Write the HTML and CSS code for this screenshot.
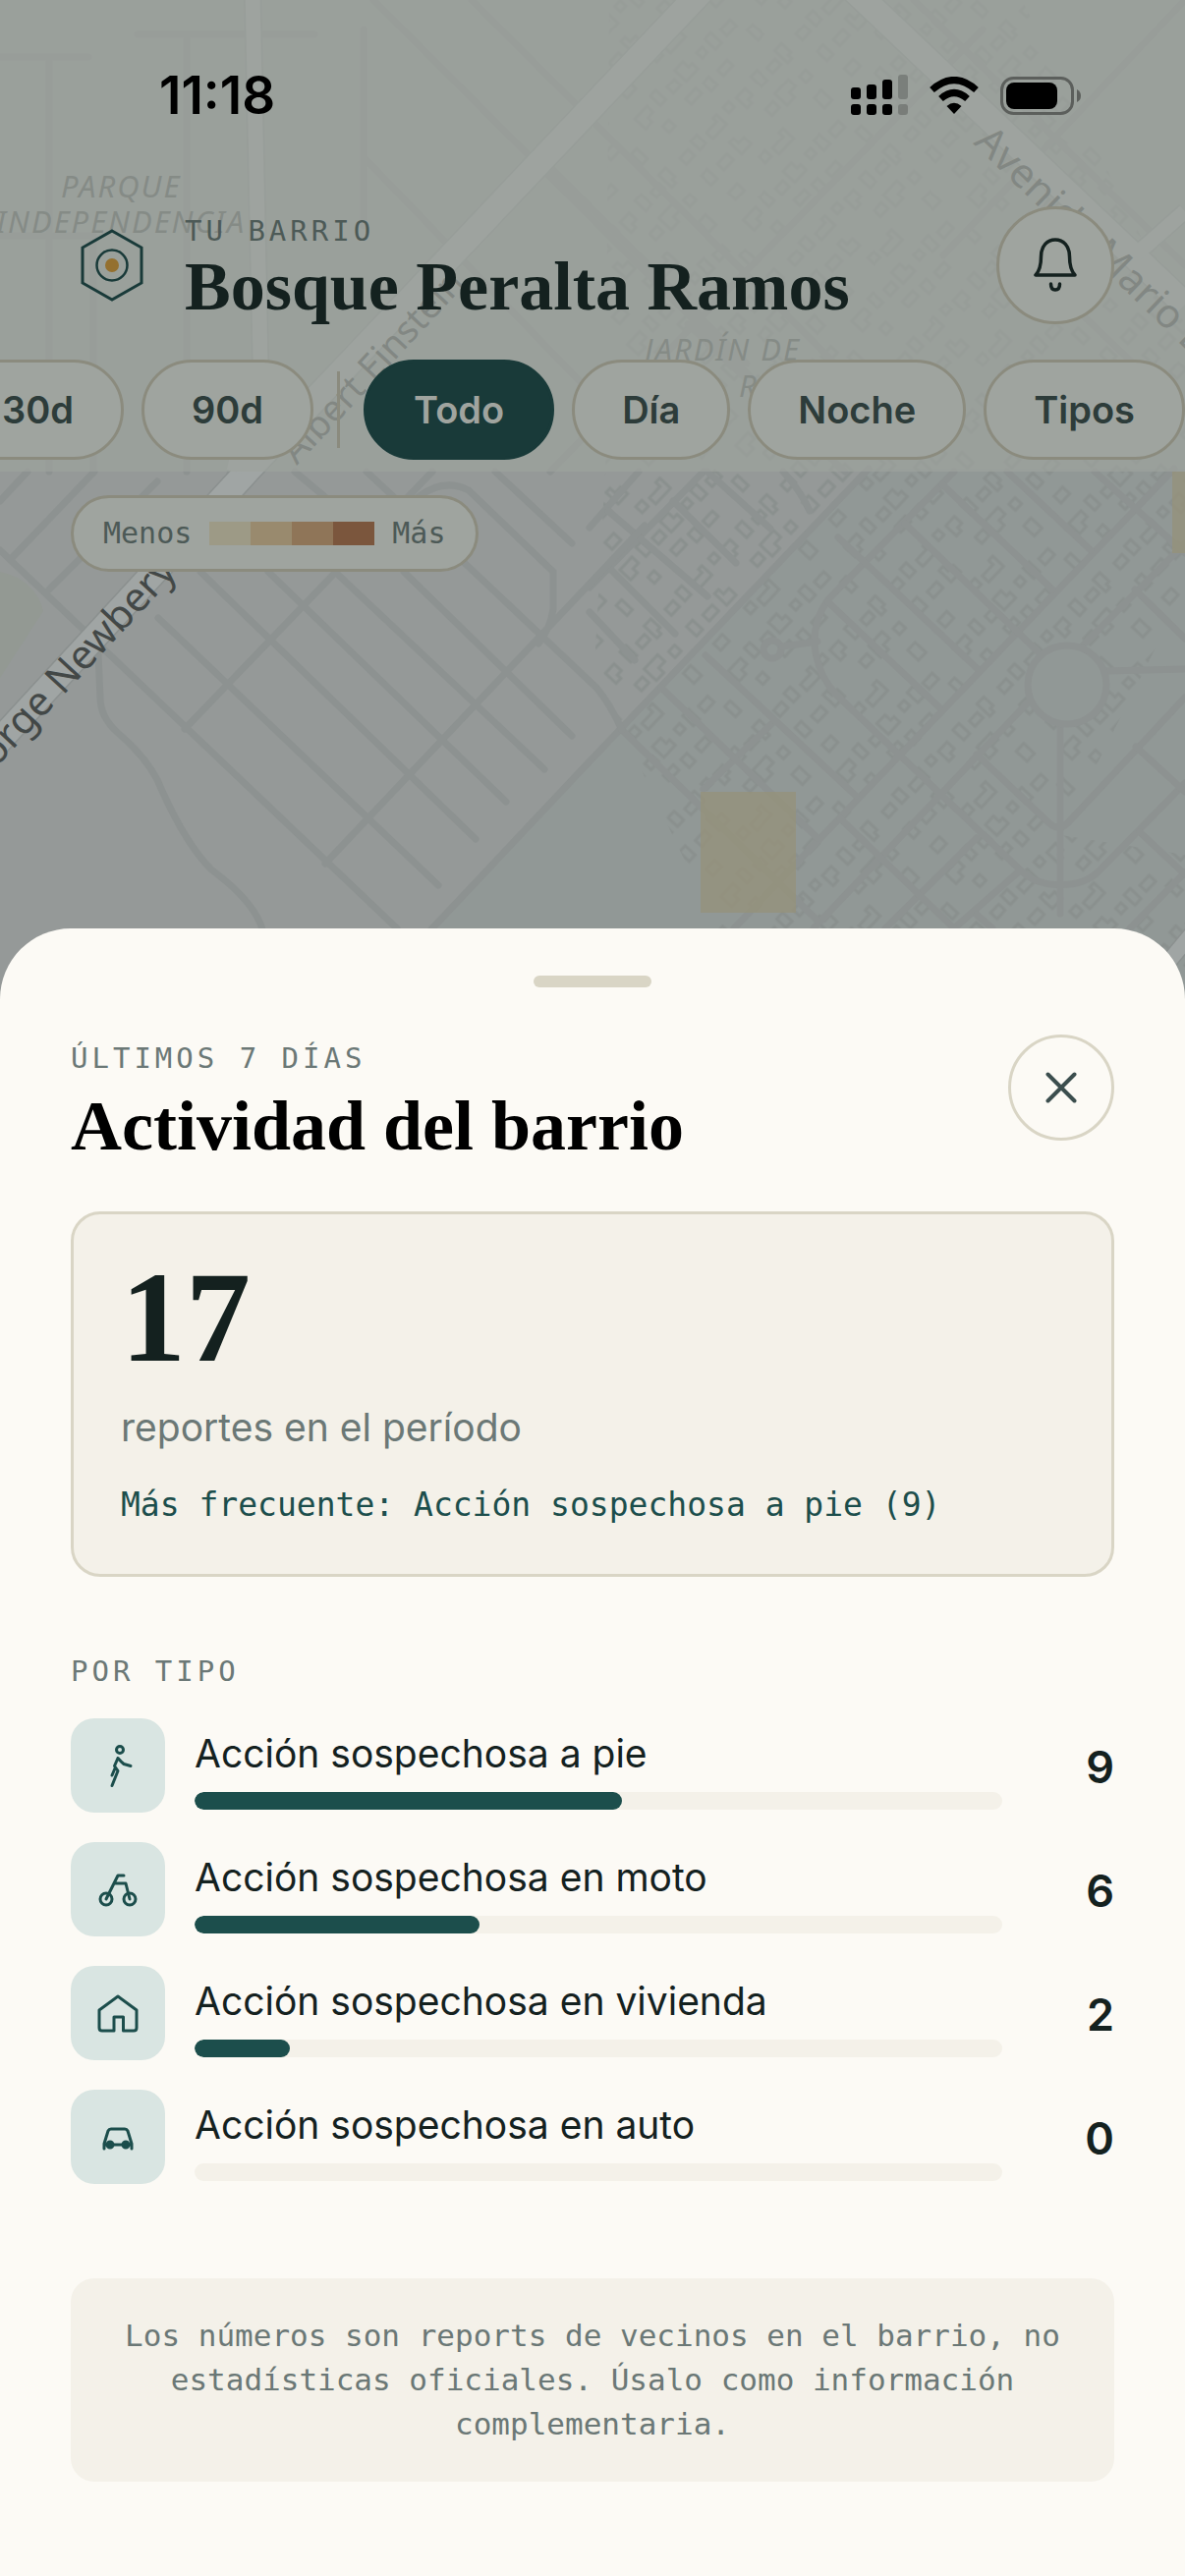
FILE: index.html
```html
<!DOCTYPE html>
<html lang="es">
<head>
<meta charset="utf-8">
<meta name="viewport" content="width=device-width, initial-scale=1">
<title>Actividad del barrio</title>
<link rel="stylesheet" href="styles.css">
</head>
<body>
<div class="screen">
  <svg class="map" viewBox="0 0 1206 1040" preserveAspectRatio="xMidYMin slice" aria-hidden="true">
    <defs>
      <pattern id="houses" width="173" height="151" patternUnits="userSpaceOnUse" patternTransform="rotate(-47)">
        <g class="house">
          <path d="M8 12h12v9h-12zM28 8h9v13h-9zM46 14h15v-5h5v14h-20zM76 9h8v8h-8zM92 12h13v10h-6v5h-7zM118 8h9v15h-9zM136 14h12v8h-12zM154 8h10v13h-4v5h-6z"/>
          <path d="M10 40h9v14h-9zM30 44h14v9h-14zM54 38h6v7h8v10h-14zM104 42h11v9h-11zM122 38h20v10h-9v7h-11zM152 44h9v9h-9z"/>
          <path d="M16 72h13v10h-13zM64 70h9v9h-9zM80 74h16v-6h6v15h-22zM146 70h11v15h-11z"/>
          <path d="M6 102h18v9h-8v6h-10zM34 98h8v14h-8zM52 104h11v9h-11zM70 98h12v8h5v8h-17zM98 102h8v8h-8zM114 99h9v15h-9zM132 104h14v9h-14z"/>
          <path d="M20 128h9v9h-9zM56 126h15v8h-15zM80 128h9v12h-9zM100 130h14v8h-14zM150 124h8v15h-8z"/>
        </g>
      </pattern>
    </defs>
    <rect class="land" width="1206" height="1040"/>
    <path class="land-alt" d="M884 477 631 744 438 947V1040h768V477z"/>
    <path class="park" d="M0 582Q36 590 44 622L0 690z"/>
    <path fill="url(#houses)" d="M620 0H1040L1206 330V600L1080 850L1206 870V1040H740L730 945 633 743 606 660 616 480z"/>
    <circle class="land-alt" cx="1086" cy="697" r="40"/>
    <g class="street">
      <path d="M600 537 650 480M600 598 716 480M438 947 600 775 884 477M716 803 785 737M971 480 843 610C815 650 835 690 851 707L1041 888C1060 905 1100 905 1118 887L1206 797M1195 477 747 945M1206 553 1102 657M1048 713 828 945M1206 710 1090 834Q1079 848 1068 838L994 768M1079 737V930M1126 683 1206 681M1037 887 971 945M994 853 901 945M1150 945 1206 888"/>
      <path d="M619 520 720 607M685 510 749 573M720 480 784 538M797 480Q815 500 824 520M600 623 646 672M619 577 687 645M853 547 994 680M843 613 956 720M921 533 1056 663M959 493 1071 600M1025 480 1110 560M1114 480 1206 563M1155 600 1206 650M1156 760 1206 806M1160 847 1206 890M718 667 871 810M673 700 832 853M633 743 832 937M855 833 971 945M994 931 1010 945"/>
      <path d="M0 560 404 945M161 629 446 901M204 582 484 854M273 582 515 816M342 583 554 783M411 582 582 749M300 480 331 506M373 480 477 577 607 700Q620 715 633 743M504 480 582 553M425 506Q452 486 477 499L563 582V620Q560 640 548 655M331 879 656 535M188 742 440 480M50 600 160 490M12 568 96 480M0 510 28 480M100 666 102 710Q102 730 120 746Q154 775 165 805Q190 860 215 885 262 920 268 950"/>
      <circle cx="1086" cy="697" r="40"/>
      <circle cx="786" cy="661" r="9"/><path d="M796 658 832 653"/>
      <path d="M0 240H95M95 240V480M0 58H90M140 35H320M50 58V480M190 40V480M370 30V230M380 0 800 420M480 0 860 380M560 480 1000 30M700 330 860 480M1206 0 960 260M930 0 1206 270M560 170 760 370M370 160 640 440M1206 420 1080 300"/>
    </g>
    <g class="avenue-edge"><path d="M715 -10 254 477 -20 775M869 -10 1206 310"/><path class="narrow" d="M1155 260 1206 215M257 -10 265 367 238 490M1180 990 1230 930"/></g>
    <g class="avenue"><path d="M715 -10 254 477 -20 775M869 -10 1206 310"/><path class="narrow" d="M1155 260 1206 215M257 -10 265 367 238 480M1180 990 1230 930"/></g>
    <rect class="heat" x="713" y="806" width="97" height="123"/>
    <rect class="heat" x="1193" y="480" width="13" height="83"/>
    <g class="place">
      <text x="62" y="201">PARQUE</text>
      <text x="-4" y="237">INDEPENDENCIA</text>
      <text x="656" y="367">JARDÍN DE</text>
      <text x="752" y="404">R</text>
    </g>
    <g class="road-name">
      <text class="small" transform="translate(302 474) rotate(-47)">Albert Einstein</text>
      <text transform="translate(990 146) rotate(44)">Avenida Mario Bravo</text>
      <text transform="translate(-12 790) rotate(-47)">Jorge Newbery</text>
    </g>
  </svg>

  <header class="top">
    <div class="status">
      <time class="clock">11:18</time>
      <div class="status-icons">
        <svg width="58" height="42" viewBox="0 0 58 42" aria-label="Señal">
          <g><rect y="13" width="10" height="12" rx="3"/><rect x="16" y="10" width="10" height="15" rx="3"/><rect x="32" y="5" width="10" height="20" rx="3"/><rect y="30" width="10" height="11" rx="3"/><rect x="16" y="30" width="10" height="11" rx="3"/><rect x="32" y="30" width="10" height="11" rx="3"/></g>
          <g opacity=".2"><rect x="48" width="10" height="25" rx="3"/><rect x="48" y="30" width="10" height="11" rx="3"/></g>
        </svg>
        <svg width="50" height="38" viewBox="0 0 50 38" aria-label="Wi-Fi">
          <g fill="none" stroke="#000" stroke-width="7"><path d="M2.500 13.500Q25-6.500 47.500 13.500"/><path d="M11.500 22.500Q25 10.500 38.500 22.500"/></g><path d="M25 38 17.500 30Q25 23.500 32.500 30z"/>
        </svg>
        <svg width="82" height="39" viewBox="0 0 82 39" aria-label="Batería">
          <rect x="1.500" y="1.500" width="72" height="36" rx="12" fill="none" stroke="#5c5f5c" stroke-width="3"/><rect x="6" y="6" width="52" height="27" rx="8"/><path d="M78 13q4 2 4 6.500T78 26z" fill="#5c5f5c"/>
        </svg>
      </div>
    </div>
    <div class="place-bar">
      <svg class="logo" width="64" height="74" viewBox="0 0 64 74" fill="none" aria-hidden="true">
        <path d="M32 2 62 19V55L32 72 2 55V19z" stroke="#193a39" stroke-width="3"/><circle cx="32" cy="37" r="15.500" stroke="#193a39" stroke-width="2.500"/><circle cx="32" cy="37" r="7" fill="#94702f"/>
      </svg>
      <div class="place-text">
        <p class="eyebrow">TU BARRIO</p>
        <h1 class="barrio">Bosque Peralta Ramos</h1>
      </div>
      <button class="round bell" type="button" aria-label="Notificaciones">
        <svg width="46" height="58" viewBox="0 0 46 58" fill="none" stroke="currentColor" stroke-width="3.500" stroke-linecap="round" stroke-linejoin="round" aria-hidden="true"><path d="M3 39H43Q37.500 33 37.500 20C37.500 9 31 3 23 3S8.500 9 8.500 20Q8.500 33 3 39z"/><path d="M18.500 48Q18.500 54 23 54T27.500 48"/></svg>
      </button>
    </div>
    <nav class="chips" aria-label="Filtros">
      <button class="chip" type="button">30d</button>
      <button class="chip" type="button">90d</button>
      <span class="divider"></span>
      <button class="chip active" type="button" aria-pressed="true">Todo</button>
      <button class="chip" type="button">Día</button>
      <button class="chip" type="button">Noche</button>
      <button class="chip" type="button">Tipos</button>
    </nav>
  </header>

  <div class="legend">
    <span>Menos</span>
    <span class="scale"><i class="s1"></i><i class="s2"></i><i class="s3"></i><i class="s4"></i></span>
    <span>Más</span>
  </div>

  <main class="sheet">
    <div class="grabber"></div>
    <div class="sheet-head">
      <div>
        <p class="eyebrow">ÚLTIMOS 7 DÍAS</p>
        <h2 class="title">Actividad del barrio</h2>
      </div>
      <button class="round close" type="button" aria-label="Cerrar">
        <svg width="32" height="32" viewBox="0 0 32 32" fill="none" stroke="currentColor" stroke-width="4" stroke-linecap="round" aria-hidden="true"><path d="M2.500 2.500 29.500 29.500M29.500 2.500 2.500 29.500"/></svg>
      </button>
    </div>

    <section class="summary">
      <p class="total">17</p>
      <p class="caption">reportes en el período</p>
      <p class="top-type">Más frecuente: Acción sospechosa a pie (9)</p>
    </section>

    <h3 class="eyebrow by-type">POR TIPO</h3>
    <ul class="types">
      <li class="type">
        <span class="tile"><svg viewBox="0 0 48 48" aria-hidden="true"><circle cx="26" cy="8" r="3.500"/><path d="M24 16.500 20.500 24.500 24 29.500 18 44.500M24 16.500Q27 20 30 22.500L37 24.500M21 27 18 34"/></svg></span>
        <div class="measure"><span class="name">Acción sospechosa a pie</span><div class="track"><div class="fill" style="width:52.94%"></div></div></div>
        <span class="count">9</span>
      </li>
      <li class="type">
        <span class="tile"><svg viewBox="0 0 48 48" aria-hidden="true"><circle cx="12" cy="34" r="6"/><circle cx="36" cy="34" r="6"/><path d="M12 34 24 10H30M20.500 18H32L36 34"/></svg></span>
        <div class="measure"><span class="name">Acción sospechosa en moto</span><div class="track"><div class="fill" style="width:35.29%"></div></div></div>
        <span class="count">6</span>
      </li>
      <li class="type">
        <span class="tile"><svg viewBox="0 0 48 48" aria-hidden="true"><path d="M24 7 43 21V39Q43 42 40 42H29.500V28H20V42H8Q5 42 5 39V21z"/></svg></span>
        <div class="measure"><span class="name">Acción sospechosa en vivienda</span><div class="track"><div class="fill" style="width:11.76%"></div></div></div>
        <span class="count">2</span>
      </li>
      <li class="type">
        <span class="tile"><svg viewBox="0 0 48 48" aria-hidden="true"><path d="M10 36V31L14 18Q15 16 17 16H31Q33 16 34 18L38 31V36M10 32H38"/><circle class="wheel" cx="16" cy="32" r="3"/><circle class="wheel" cx="32" cy="32" r="3"/></svg></span>
        <div class="measure"><span class="name">Acción sospechosa en auto</span><div class="track"><div class="fill" style="width:0%"></div></div></div>
        <span class="count">0</span>
      </li>
    </ul>

    <p class="note">Los números son reports de vecinos en el barrio, no estadísticas oficiales. Úsalo como información complementaria.</p>
  </main>
</div>
</body>
</html>
```
FILE: styles.css
```css
* { box-sizing: border-box; }
body, h1, h2, h3, p, ul { margin: 0; padding: 0; }
body {
  background: #949998;
  font-family: Inter, "Liberation Sans", sans-serif;
  color: #14211f;
}
button { font: inherit; color: inherit; padding: 0; }
svg { display: block; flex: none; }

.screen {
  position: relative;
  min-height: 100vh;
  display: flex;
  flex-direction: column;
  align-items: flex-start;
  overflow: hidden;
}

/* Map */
.map { position: absolute; top: 0; left: 0; width: 100%; height: 1040px; }
.land { fill: #959998; }
.land-alt { fill: #919896; }
.park { fill: #939993; }
.house { fill: none; stroke: #8a908e; stroke-width: 3; }
.street { fill: none; stroke: #8d9291; stroke-width: 7; stroke-linecap: round; }
.avenue, .avenue-edge { fill: none; stroke: #a0a5a4; stroke-width: 25; }
.avenue-edge { stroke: #8b908f; stroke-width: 28; }
.avenue .narrow { stroke-width: 15; }
.avenue-edge .narrow { stroke-width: 18; }
.heat { fill: #96917a; fill-opacity: .75; }
.place {
  font: italic 31px "Noto Sans", sans-serif;
  letter-spacing: 2px;
  fill: #4f5453;
}
.road-name { font: 41px "Noto Sans", sans-serif; fill: #434847; }
.road-name .small { font-size: 37px; }

/* Header over the map */
.top {
  position: relative;
  width: 100%;
  padding-bottom: 12px;
  background: rgba(157, 162, 156, .7);
}
.status {
  display: flex;
  justify-content: space-between;
  align-items: center;
  height: 210px;
  padding: 0 106px 16px 162px;
}
.clock { font-size: 53px; font-weight: 600; line-height: 60px; color: #000; }
.status-icons { display: flex; align-items: center; gap: 22px; }
.place-bar {
  display: flex;
  align-items: center;
  height: 120px;
  padding: 0 72px 0 82px;
}
.place-text { flex: 1; padding: 8px 0 0 42px; }
.eyebrow {
  font: 400 29px/36px "DejaVu Sans Mono", "Liberation Mono", monospace;
  letter-spacing: 4px;
  color: #6b7876;
}
.top .eyebrow { color: #4d5a57; }
.barrio { font: 700 70px/78px "Liberation Serif", serif; color: #14211f; white-space: nowrap; }
.round {
  flex: none;
  display: grid;
  place-items: center;
  border: 3px solid #8b8b7e;
  border-radius: 50%;
}
.bell { width: 120px; height: 120px; background: #9fa49f; color: #14211f; }
.chips {
  display: flex;
  justify-content: flex-end;
  align-items: center;
  gap: 18px;
  margin-top: 36px;
  overflow: hidden;
}
.chip {
  flex: none;
  height: 102px;
  padding: 0 48px;
  border: 3px solid #8b8b7e;
  border-radius: 51px;
  background: #9fa49f;
  color: #2d3c3a;
  font-size: 38px;
  font-weight: 600;
}
.chip.active { background: #193a39; border-color: #193a39; color: #a0a49f; }
.divider { flex: none; width: 3px; height: 78px; margin: 0 6px; background: #8b8b7e; }

.legend {
  position: relative;
  display: flex;
  align-items: center;
  gap: 18px;
  height: 78px;
  margin: 24px 72px;
  padding: 0 30px;
  border: 3px solid #8b8b7e;
  border-radius: 39px;
  background: #9fa49f;
  color: #4d5a57;
  font: 30px/36px "DejaVu Sans Mono", "Liberation Mono", monospace;
}
.scale { display: flex; }
.scale i { width: 42px; height: 24px; }
.s1 { background: #9d9a86; }
.s2 { background: #998a6e; }
.s3 { background: #8f7558; }
.s4 { background: #7b563d; }

/* Bottom sheet */
.sheet {
  position: relative;
  width: 100%;
  margin-top: auto;
  padding: 48px 72px 96px;
  border-radius: 72px 72px 0 0;
  background: #fcfaf5;
}
.grabber { width: 120px; height: 12px; margin: 0 auto; border-radius: 6px; background: #d9d5c5; }
.sheet-head {
  display: flex;
  justify-content: space-between;
  align-items: flex-start;
  margin: 48px 0 36px;
}
.sheet-head .eyebrow { padding-top: 6px; }
.title { font: 700 72px/90px "Liberation Serif", serif; color: #000; padding: 6px 0; }
.close { width: 108px; height: 108px; background: none; border-color: #d9d5c5; color: #3c4e4e; }

.summary {
  padding: 36px 48px;
  border: 3px solid #d9d5c5;
  border-radius: 30px;
  background: #f4f1e9;
}
.total { font: 700 132px/138px "Liberation Serif", serif; }
.caption { margin-top: 16px; font-size: 39px; line-height: 54px; color: #6b7876; }
.top-type {
  margin: 28px 0 10px;
  font: 33px/48px "DejaVu Sans Mono", "Liberation Mono", monospace;
  color: #1c4e4c;
}

.by-type { margin-top: 78px; }
.types { display: grid; gap: 30px; margin-top: 30px; list-style: none; }
.type { display: flex; align-items: center; gap: 30px; }
.tile {
  display: grid;
  place-items: center;
  width: 96px;
  height: 96px;
  border-radius: 24px;
  background: #d9e5e2;
}
.tile svg { width: 48px; height: 48px; fill: none; stroke: #1c4e4c; stroke-width: 3; stroke-linecap: round; stroke-linejoin: round; }
.tile .wheel { fill: #1c4e4c; }
.measure { flex: 1; display: grid; gap: 12px; padding-top: 6px; }
.name { font-size: 39px; line-height: 54px; }
.track { height: 18px; border-radius: 9px; background: #f4f1e9; overflow: hidden; }
.fill { height: 100%; border-radius: 9px; background: #1c4e4c; }
.count { width: 84px; padding-top: 3px; font-size: 45px; line-height: 54px; font-weight: 600; text-align: right; }

.note {
  margin-top: 96px;
  padding: 36px 42px;
  border-radius: 24px;
  background: #f4f1e9;
  color: #6b7876;
  font: 31px/45px "DejaVu Sans Mono", "Liberation Mono", monospace;
  text-align: center;
}
```
